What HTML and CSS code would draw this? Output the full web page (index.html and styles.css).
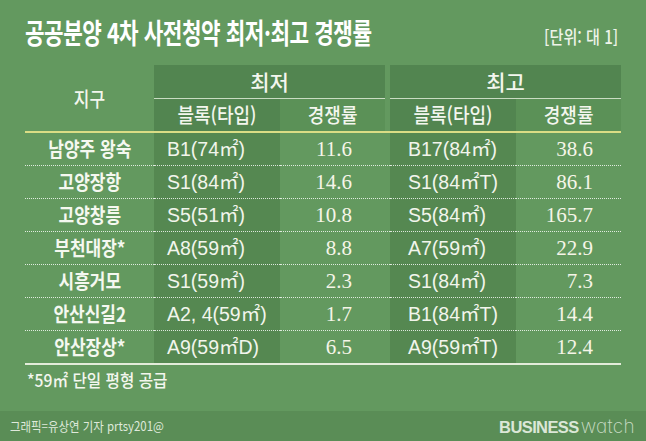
FILE: index.html
```html
<!DOCTYPE html>
<html lang="ko">
<head>
<meta charset="utf-8">
<title>공공분양 4차 사전청약 최저·최고 경쟁률</title>
<link rel="stylesheet" href="styles.css">
</head>
<body>
<header class="top">
  <h1 class="title"><span class="title-text">공공분양 4차 사전청약 최저·최고 경쟁률</span></h1>
  <div class="unit"><span class="unit-text">[단위: 대 1]</span></div>
</header>

<table class="rates">
  <colgroup>
    <col class="c-area">
    <col class="c-blk">
    <col class="c-rate1">
    <col class="c-blk">
    <col class="c-rate2">
  </colgroup>
  <thead>
    <tr>
      <th rowspan="2" class="area-h"><span class="sq">지구</span></th>
      <th colspan="2" class="grp"><div class="grp-in gap">최저</div></th>
      <th colspan="2" class="grp"><div class="grp-in">최고</div></th>
    </tr>
    <tr>
      <th class="sub blk-h"><span class="sq-h">블록(타입)</span></th>
      <th class="sub"><div class="rate-in gap"><span class="sq-h">경쟁률</span></div></th>
      <th class="sub blk-h"><span class="sq-h">블록(타입)</span></th>
      <th class="sub"><div class="rate-in"><span class="sq-h">경쟁률</span></div></th>
    </tr>
  </thead>
  <tbody>
    <tr>
      <td class="area"><span class="sq">남양주 왕숙</span></td>
      <td class="blk">B1(74㎡)</td><td class="num">11.6</td>
      <td class="blk hi">B17(84㎡)</td><td class="num hi">38.6</td>
    </tr>
    <tr>
      <td class="area"><span class="sq">고양장항</span></td>
      <td class="blk">S1(84㎡)</td><td class="num">14.6</td>
      <td class="blk hi">S1(84㎡T)</td><td class="num hi">86.1</td>
    </tr>
    <tr>
      <td class="area"><span class="sq">고양창릉</span></td>
      <td class="blk">S5(51㎡)</td><td class="num">10.8</td>
      <td class="blk hi">S5(84㎡)</td><td class="num hi">165.7</td>
    </tr>
    <tr>
      <td class="area"><span class="sq">부천대장*</span></td>
      <td class="blk">A8(59㎡)</td><td class="num">8.8</td>
      <td class="blk hi">A7(59㎡)</td><td class="num hi">22.9</td>
    </tr>
    <tr>
      <td class="area"><span class="sq">시흥거모</span></td>
      <td class="blk">S1(59㎡)</td><td class="num">2.3</td>
      <td class="blk hi">S1(84㎡)</td><td class="num hi">7.3</td>
    </tr>
    <tr>
      <td class="area"><span class="sq">안산신길2</span></td>
      <td class="blk">A2, 4(59㎡)</td><td class="num">1.7</td>
      <td class="blk hi">B1(84㎡T)</td><td class="num hi">14.4</td>
    </tr>
    <tr>
      <td class="area"><span class="sq">안산장상*</span></td>
      <td class="blk">A9(59㎡D)</td><td class="num">6.5</td>
      <td class="blk hi">A9(59㎡T)</td><td class="num hi">12.4</td>
    </tr>
  </tbody>
</table>

<p class="note"><span class="note-text">*59㎡ 단일 평형 공급</span></p>

<footer class="foot">
  <div class="credit"><span class="credit-text">그래픽=유상연 기자 prtsy201@</span></div>
  <div class="logo"><span class="logo-b">BUSINESS</span><span class="logo-w">watch</span></div>
</footer>
</body>
</html>
```

FILE: styles.css
```css
* { box-sizing: border-box; }

html, body { margin: 0; padding: 0; }

body {
  width: 646px;
  height: 441px;
  overflow: hidden;
  background: #63995f;
  color: #f4f7ef;
  font-family: "Noto Sans CJK KR", "Noto Sans", sans-serif;
  display: flex;
  flex-direction: column;
}

/* ---------- title ---------- */
.top {
  display: flex;
  justify-content: space-between;
  align-items: baseline;
  height: 48px;
  padding: 17px 28px 0 25px;
}

.title {
  margin: 0;
  font-size: 28px;
  line-height: 30px;
  font-weight: 700;
  color: #ffffff;
  white-space: nowrap;
}

.title-text {
  display: inline-block;
  letter-spacing: -0.6px;
  transform: scaleX(0.76);
  transform-origin: left center;
}

.unit {
  font-size: 18px;
  line-height: 20px;
  font-weight: 500;
  color: #eef3e9;
  white-space: nowrap;
}

.unit-text {
  display: inline-block;
  transform: scaleX(0.84);
  transform-origin: right center;
}

/* ---------- table ---------- */
.rates {
  margin: 17px 0 0 25px;
  width: 596px;
  border-collapse: separate;
  border-spacing: 0;
  table-layout: fixed;
}

.c-area { width: 129px; }
.c-blk { width: 126px; }
.c-rate1 { width: 110px; }
.c-rate2 { width: 105px; }

.rates th,
.rates td { padding: 0; }

.rates th {
  font-weight: 500;
  font-size: 20px;
  color: #f3f6ee;
  text-align: center;
}

.sq,
.sq-h {
  display: inline-block;
  transform: scaleX(0.85);
  transform-origin: center center;
  white-space: nowrap;
}

.sq-h { transform: scaleX(0.9); }

.area-h {
  vertical-align: middle;
  border-bottom: 2px solid #dadd85;
}

.grp-in {
  height: 34px;
  line-height: 33px;
  font-size: 21px;
  background: #528550;
  border-bottom: 1px solid #c9dcc2;
}

.gap { margin-right: 5px; }

.sub {
  height: 34px;
  line-height: 32px;
  border-bottom: 2px solid #dadd85;
  vertical-align: top;
}

.blk-h { background: #528550; }

.rate-in {
  height: 32px;
  line-height: 32px;
  background: #5b9157;
}

.rates td {
  height: 33px;
  line-height: 32px;
  vertical-align: middle;
  border-bottom: 1px dotted rgba(255, 255, 255, 0.8);
  white-space: nowrap;
}

.rates tbody tr:last-child td {
  height: 34px;
  border-bottom: 2px solid #e3ecda;
}

.area {
  text-align: center;
  font-size: 20px;
  font-weight: 700;
  color: #f5f8f0;
}

.blk {
  background: #558851;
  font-family: "Liberation Sans", "Noto Sans CJK KR", sans-serif;
  font-size: 19.5px;
  color: #f2f5ec;
  padding-left: 13px !important;
}

.blk.hi { padding-left: 18px !important; }

.num {
  font-family: "Liberation Serif", serif;
  font-size: 21px;
  text-align: right;
  color: #f6f5e8;
  padding-right: 38px !important;
}

.num.hi { padding-right: 28px !important; }

/* ---------- footnote ---------- */
.note {
  margin: 5px 0 0 27px;
  font-size: 17px;
  line-height: 20px;
  font-weight: 500;
  color: #f3f6ee;
}

.note-text {
  display: inline-block;
  transform: scaleX(0.92);
  transform-origin: left center;
  white-space: nowrap;
}

/* ---------- footer ---------- */
.foot {
  margin-top: auto;
  height: 30px;
  background: #5a8d56;
  display: flex;
  justify-content: space-between;
  align-items: center;
  padding: 0 11px 0 10px;
}

.credit {
  font-size: 13px;
  line-height: 16px;
  color: #dfe9db;
  white-space: nowrap;
}

.credit-text {
  display: inline-block;
  transform: scaleX(0.88);
  transform-origin: left center;
}

.logo {
  display: flex;
  align-items: baseline;
  white-space: nowrap;
}

.logo-b {
  font-family: "Liberation Sans", sans-serif;
  font-weight: 700;
  font-size: 16.5px;
  letter-spacing: -0.6px;
  color: #dbe7d7;
}

.logo-w {
  font-family: Inter, "Liberation Sans", sans-serif;
  font-weight: 200;
  font-size: 19px;
  letter-spacing: 0.3px;
  margin-left: 2px;
  color: #c9dcc5;
  font-feature-settings: "cv11";
}
```
